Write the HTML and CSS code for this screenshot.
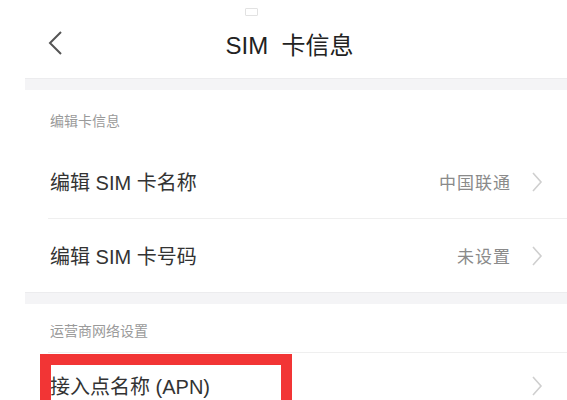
FILE: index.html
```html
<!DOCTYPE html>
<html lang="zh-CN">
<head>
<meta charset="utf-8">
<link rel="stylesheet" href="styles.css">
</head>
<body>
<div class="page">
  <div class="status">
    <span class="status-icon"></span>
  </div>
  <div class="header">
    <svg class="back" width="18" height="26" viewBox="0 0 18 26">
      <path d="M15 2 L4 13 L15 24" fill="none" stroke="#555" stroke-width="2"/>
    </svg>
    <div class="title">SIM&nbsp; 卡信息</div>
  </div>
  <div class="band"></div>
  <div class="section-title first">编辑卡信息</div>
  <div class="row">
    <div class="label">编辑 SIM 卡名称</div>
    <div class="value">中国联通</div>
    <svg class="chev" width="12" height="20" viewBox="0 0 12 20"><path d="M2 1 L10 10 L2 19" fill="none" stroke="#cfcfcf" stroke-width="1.6"/></svg>
  </div>
  <div class="divider"></div>
  <div class="row">
    <div class="label">编辑 SIM 卡号码</div>
    <div class="value">未设置</div>
    <svg class="chev" width="12" height="20" viewBox="0 0 12 20"><path d="M2 1 L10 10 L2 19" fill="none" stroke="#cfcfcf" stroke-width="1.6"/></svg>
  </div>
  <div class="band"></div>
  <div class="section-title">运营商网络设置</div>
  <div class="divider"></div>
  <div class="row highlight-row">
    <div class="label">接入点名称 (APN)</div>
    <svg class="chev" width="12" height="20" viewBox="0 0 12 20"><path d="M2 1 L10 10 L2 19" fill="none" stroke="#cfcfcf" stroke-width="1.6"/></svg>
    <div class="red-box"></div>
  </div>
</div>
</body>
</html>
```
FILE: styles.css
```css
html, body {
  margin: 0;
  padding: 0;
  background: #ffffff;
}
body {
  font-family: "Liberation Sans", "Noto Sans CJK SC", sans-serif;
  overflow: hidden;
}
.page {
  width: 567px;
  height: 400px;
  overflow: hidden;
  position: relative;
}
.status {
  height: 20px;
  display: flex;
  justify-content: flex-start;
  padding-left: 245px;
  box-sizing: border-box;
  padding-top: 8px;
}
.status-icon {
  width: 11px;
  height: 6px;
  border: 1px solid #e2e2e2;
  border-radius: 1px;
}
.header {
  height: 58px;
  display: flex;
  align-items: center;
  position: relative;
}
.back {
  margin-left: 46px;
  margin-top: -12px;
}
.title {
  position: absolute;
  left: 0;
  right: 0;
  top: 6px;
  text-align: center;
  font-size: 24px;
  color: #222;
  padding-left: 12px;
}
.band {
  margin-left: 25px;
  height: 12px;
  background: #f4f4f6;
  border-top: 1px solid #ececee;
  box-sizing: border-box;
}
.section-title {
  height: 48px;
  padding-left: 50px;
  box-sizing: border-box;
  display: flex;
  align-items: center;
  padding-top: 4px;
  font-size: 14px;
  color: #9a9a9a;
}
.section-title.first {
  height: 55px;
  align-items: flex-start;
  padding-top: 20px;
}
.row {
  height: 73px;
  display: flex;
  align-items: center;
  padding-left: 50px;
  padding-right: 24px;
  box-sizing: border-box;
  position: relative;
}
.label {
  flex: 1;
  font-size: 20px;
  color: #333;
}
.value {
  font-size: 17px;
  color: #8a8a8a;
  margin-right: 20px;
  letter-spacing: 1px;
}
.chev {
  display: block;
}
.highlight-row {
  padding-bottom: 8px;
}
.divider {
  margin-left: 48px;
  height: 1px;
  background: #efefef;
}
.red-box {
  position: absolute;
  left: 40px;
  top: 1px;
  width: 252px;
  height: 80px;
  border: 11px solid #f23535;
  border-bottom: none;
  box-sizing: border-box;
}
```
